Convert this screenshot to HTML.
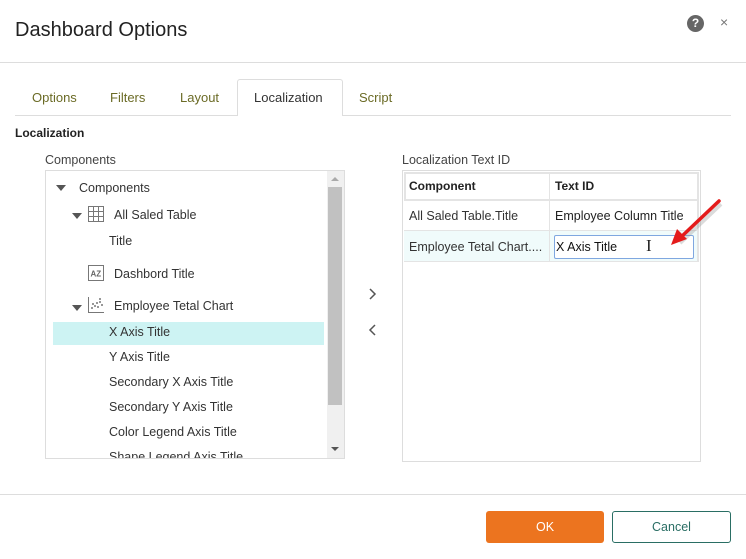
<!DOCTYPE html>
<html><head><meta charset="utf-8"><style>
*{margin:0;padding:0;box-sizing:border-box}
body{width:746px;height:559px;background:#fff;font-family:"Liberation Sans",Arial,sans-serif;color:#333;position:relative;overflow:hidden;font-size:12.5px}
.a{position:absolute;white-space:nowrap}
.t{color:#6b6b26;font-size:13px}
.tri{width:0;height:0;border-left:5px solid transparent;border-right:5px solid transparent;border-top:6px solid #555;position:absolute}
</style></head><body>
<div class="a" style="left:15px;top:19px;font-size:20px;color:#222">Dashboard Options</div>
<div class="a" style="left:687px;top:15px;width:17px;height:17px;border-radius:50%;background:#666;color:#fff;font-weight:bold;font-size:12px;text-align:center;line-height:17px">?</div>
<div class="a" style="left:720px;top:14px;color:#777;font-size:14px">×</div>
<div class="a" style="left:0;top:62px;width:746px;height:1px;background:#ddd"></div>

<div class="a" style="left:15px;top:115px;width:716px;height:1px;background:#ddd"></div>
<div class="a" style="left:237px;top:79px;width:106px;height:37px;border:1px solid #ddd;border-bottom:none;background:#fff;border-radius:3px 3px 0 0"></div>
<div class="a t" style="left:32px;top:90px">Options</div>
<div class="a t" style="left:110px;top:90px">Filters</div>
<div class="a t" style="left:180px;top:90px">Layout</div>
<div class="a" style="left:254px;top:90px;font-size:13px;color:#333">Localization</div>
<div class="a t" style="left:359px;top:90px">Script</div>

<div class="a" style="left:15px;top:126px;font-weight:bold;font-size:12px;color:#222">Localization</div>
<div class="a" style="left:45px;top:153px;font-size:12.5px;color:#444">Components</div>
<div class="a" style="left:45px;top:170px;width:300px;height:289px;border:1px solid #ddd;overflow:hidden">
  <div class="a" style="left:281px;top:0;width:17px;height:287px;background:#f0f0f0"></div>
  <div class="a" style="left:282px;top:16px;width:14px;height:218px;background:#c1c1c1"></div>
  <div class="a" style="left:285px;top:6px;border-left:4px solid transparent;border-right:4px solid transparent;border-bottom:4px solid #aaa;width:0;height:0"></div>
  <div class="a" style="left:285px;top:276px;border-left:4px solid transparent;border-right:4px solid transparent;border-top:4px solid #555;width:0;height:0"></div>
  <div class="a" style="left:7px;top:151px;width:271px;height:23px;background:#cdf3f3"></div>
  <div class="tri" style="left:10px;top:14px"></div>
  <div class="a" style="left:33px;top:10px">Components</div>
  <div class="tri" style="left:26px;top:42px"></div>
  <svg class="a" style="left:42px;top:35px" width="16" height="16"><rect x="0.5" y="0.5" width="15" height="15" fill="none" stroke="#777"/><path d="M5.5 0V16M10.5 0V16M0 5.5H16M0 10.5H16" stroke="#777"/></svg>
  <div class="a" style="left:68px;top:37px">All Saled Table</div>
  <div class="a" style="left:63px;top:63px">Title</div>
  <svg class="a" style="left:42px;top:94px" width="16" height="16"><rect x="0.5" y="0.5" width="15" height="15" fill="none" stroke="#777"/><text x="2.5" y="11.5" font-size="8" font-family="Liberation Sans" font-weight="bold" fill="#666">AZ</text></svg>
  <div class="a" style="left:68px;top:96px">Dashbord Title</div>
  <div class="tri" style="left:26px;top:134px"></div>
  <svg class="a" style="left:42px;top:126px" width="16" height="16"><path d="M0.5 0V15.5H16" stroke="#777" fill="none"/><g fill="#777"><circle cx="4" cy="11" r="1"/><circle cx="7" cy="9" r="1"/><circle cx="10" cy="10" r="1"/><circle cx="9" cy="6" r="1"/><circle cx="12" cy="5" r="1"/><circle cx="14" cy="8" r="1"/><circle cx="5" cy="7" r="1"/><circle cx="12" cy="2" r="1"/></g></svg>
  <div class="a" style="left:68px;top:128px">Employee Tetal Chart</div>
  <div class="a" style="left:63px;top:154px">X Axis Title</div>
  <div class="a" style="left:63px;top:179px">Y Axis Title</div>
  <div class="a" style="left:63px;top:204px">Secondary X Axis Title</div>
  <div class="a" style="left:63px;top:229px">Secondary Y Axis Title</div>
  <div class="a" style="left:63px;top:254px">Color Legend Axis Title</div>
  <div class="a" style="left:63px;top:279px">Shape Legend Axis Title</div>
</div>

<svg class="a" style="left:367px;top:288px" width="12" height="50"><path d="M3 1L8 6L3 11" stroke="#555" stroke-width="1.5" fill="none"/><path d="M8 37L3 42L8 47" stroke="#555" stroke-width="1.5" fill="none"/></svg>

<div class="a" style="left:402px;top:153px;color:#444">Localization Text ID</div>
<div class="a" style="left:402px;top:170px;width:299px;height:292px;border:1px solid #ddd"></div>
<div class="a" style="left:404px;top:172px;width:295px;height:2px;background:#e4e4e4"></div>
<div class="a" style="left:404px;top:172px;width:2px;height:28px;background:#e4e4e4"></div>
<div class="a" style="left:697px;top:172px;width:2px;height:90px;background:#e4e4e4"></div>
<div class="a" style="left:404px;top:199px;width:295px;height:2px;background:#e4e4e4"></div>
<div class="a" style="left:549px;top:172px;width:1px;height:90px;background:#e4e4e4"></div>
<div class="a" style="left:404px;top:230px;width:295px;height:1px;background:#e4e4e4"></div>
<div class="a" style="left:404px;top:231px;width:145px;height:31px;background:#f0fbfb"></div>
<div class="a" style="left:550px;top:231px;width:147px;height:31px;background:#f0fbfb"></div>
<div class="a" style="left:404px;top:261px;width:295px;height:1px;background:#e4e4e4"></div>
<div class="a" style="left:409px;top:179px;font-weight:bold;font-size:12px;color:#222">Component</div>
<div class="a" style="left:555px;top:179px;font-weight:bold;font-size:12px;color:#222">Text ID</div>
<div class="a" style="left:409px;top:209px">All Saled Table.Title</div>
<div class="a" style="left:555px;top:209px;color:#222">Employee Column Title</div>
<div class="a" style="left:409px;top:240px">Employee Tetal Chart....</div>
<div class="a" style="left:554px;top:235px;width:140px;height:24px;border:1px solid #7fa7e0;background:#fff;border-radius:2px"></div>
<div class="a" style="left:556px;top:240px;color:#111">X Axis Title</div>
<div class="a" style="left:646px;top:236px;font-family:'Liberation Serif',serif;font-size:17px;color:#222">I</div>
<svg class="a" style="left:660px;top:195px" width="70" height="60"><path d="M59 6L18 45" stroke="#999" stroke-width="4" opacity=".35" transform="translate(2,3)"/><path d="M59 6L20 43" stroke="#e41b1b" stroke-width="3.5" stroke-linecap="round"/><path d="M11 50L17 34L27 44Z" fill="#e41b1b"/></svg>

<div class="a" style="left:0;top:494px;width:746px;height:1px;background:#ddd"></div>
<div class="a" style="left:486px;top:511px;width:118px;height:32px;background:#ec741f;border-radius:3px;color:#fff;text-align:center;line-height:32px;font-size:12.5px">OK</div>
<div class="a" style="left:612px;top:511px;width:119px;height:32px;border:1px solid #2a6e64;border-radius:3px;color:#2a6e64;text-align:center;line-height:30px;font-size:12.5px">Cancel</div>
</body></html>
